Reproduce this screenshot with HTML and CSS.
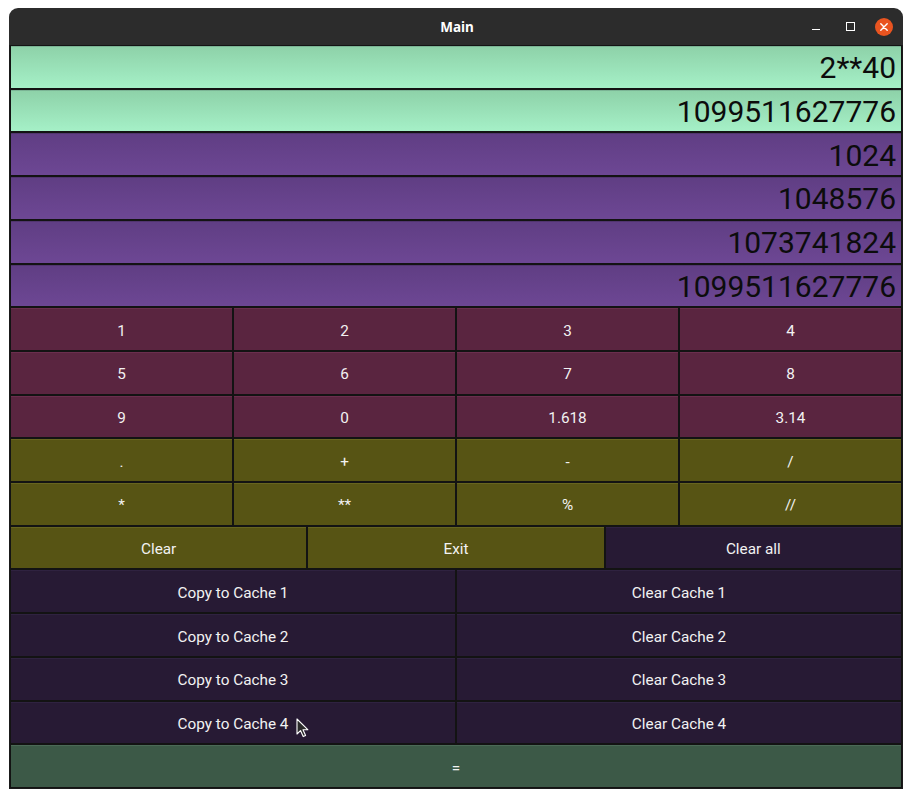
FILE: index.html
```html
<!DOCTYPE html>
<html>
<head>
<meta charset="utf-8">
<link rel="stylesheet" href="styles.css">
</head>
<body>
<div class="window">
  <div class="titlebar">
    <span class="title">Main</span>
    <div class="controls">
      <span class="ctl min"></span>
      <span class="ctl max"></span>
      <span class="ctl close">
        <svg width="18" height="18" viewBox="0 0 18 18"><circle cx="9" cy="9" r="9" fill="#e95420"/><path d="M5.8 5.8 L12.2 12.2 M12.2 5.8 L5.8 12.2" stroke="#fff" stroke-width="1.4" stroke-linecap="round"/></svg>
      </span>
    </div>
  </div>
  <div class="content">
    <div class="disp input">2**40</div>
    <div class="disp input">1099511627776</div>
    <div class="disp cache">1024</div>
    <div class="disp cache">1048576</div>
    <div class="disp cache">1073741824</div>
    <div class="disp cache">1099511627776</div>

    <div class="btn num c4">1</div>
    <div class="btn num c4">2</div>
    <div class="btn num c4">3</div>
    <div class="btn num c4">4</div>
    <div class="btn num c4">5</div>
    <div class="btn num c4">6</div>
    <div class="btn num c4">7</div>
    <div class="btn num c4">8</div>
    <div class="btn num c4">9</div>
    <div class="btn num c4">0</div>
    <div class="btn num c4">1.618</div>
    <div class="btn num c4">3.14</div>

    <div class="btn op c4">.</div>
    <div class="btn op c4">+</div>
    <div class="btn op c4">-</div>
    <div class="btn op c4">/</div>
    <div class="btn op c4">*</div>
    <div class="btn op c4">**</div>
    <div class="btn op c4">%</div>
    <div class="btn op c4">//</div>

    <div class="btn op c3">Clear</div>
    <div class="btn op c3">Exit</div>
    <div class="btn dark c3">Clear all</div>

    <div class="btn dark c2">Copy to Cache 1</div>
    <div class="btn dark c2">Clear Cache 1</div>
    <div class="btn dark c2">Copy to Cache 2</div>
    <div class="btn dark c2">Clear Cache 2</div>
    <div class="btn dark c2">Copy to Cache 3</div>
    <div class="btn dark c2">Clear Cache 3</div>
    <div class="btn dark c2">Copy to Cache 4</div>
    <div class="btn dark c2">Clear Cache 4</div>

    <div class="btn eq c1">=</div>
  </div>
  <svg class="cursor" width="14" height="20" viewBox="0 0 14 20"><path d="M1 1 L1 16 L4.5 12.6 L7.2 18.6 L9.6 17.5 L7 11.7 L11.8 11.7 Z" fill="#2a2a2a" stroke="#fff" stroke-width="1.1" stroke-linejoin="round"/></svg>
</div>
</body>
</html>
```
FILE: styles.css
```css
html, body {
  margin: 0;
  padding: 0;
  background: #ffffff;
}
body {
  font-family: Roboto, "Liberation Sans", sans-serif;
}
.window {
  position: relative;
  margin: 8px 0 0 9px;
  width: 894px;
}
.titlebar {
  height: 37px;
  background: #2c2c2c;
  border-radius: 9px 9px 0 0;
  display: flex;
  align-items: center;
  justify-content: center;
  position: relative;
}
.title {
  color: #ffffff;
  font-family: "Noto Sans", "DejaVu Sans", sans-serif;
  font-weight: bold;
  font-size: 13.5px;
  margin-left: 2px;
}
.controls {
  position: absolute;
  right: 10px;
  top: 0;
  height: 37px;
  display: flex;
  align-items: center;
  gap: 16px;
}
.ctl {
  width: 18px;
  height: 18px;
  display: flex;
  align-items: center;
  justify-content: center;
  position: relative;
}
.ctl.min::before {
  content: "";
  width: 8px;
  height: 1px;
  background: #ffffff;
  margin-top: 6px;
}
.ctl.max::before {
  content: "";
  width: 7px;
  height: 7px;
  border: 1px solid #ffffff;
}
.ctl.close svg {
  display: block;
}
.content {
  height: 741px;
  background: #131313;
  border: 1px solid #1a1a1a;
  border-top: none;
  padding: 1px;
  display: grid;
  grid-template-columns: repeat(12, 1fr);
  grid-template-rows: repeat(17, 1fr);
  gap: 2px;
}
.disp {
  grid-column: span 12;
  display: flex;
  align-items: center;
  justify-content: flex-end;
  padding-right: 5px;
  padding-top: 1px;
  font-size: 30px;
  color: #0c0c0c;
  border-top: 1px solid rgba(0,0,0,0.25);
}
.input {
  background: linear-gradient(#8ed2a9, #a5f0c7);
}
.cache {
  background: linear-gradient(#603e84, #6d4794);
}
.btn {
  display: flex;
  align-items: center;
  justify-content: center;
  color: #f2f2f2;
  font-size: 15.3px;
  padding-top: 2px;
}
.c4 { grid-column: span 3; }
.c3 { grid-column: span 4; }
.c2 { grid-column: span 6; }
.c1 { grid-column: span 12; }
.num {
  background: #5a2540;
  border-top: 1px solid #6b2e4e;
}
.op {
  background: #575414;
  border-top: 1px solid #67651f;
}
.dark {
  background: #271a34;
  border-top: 1px solid #2f2240;
}
.eq {
  background: #3c5947;
  border-top: 1px solid #4b6a57;
}
.cursor {
  position: absolute;
  left: 287px;
  top: 710px;
}
```
